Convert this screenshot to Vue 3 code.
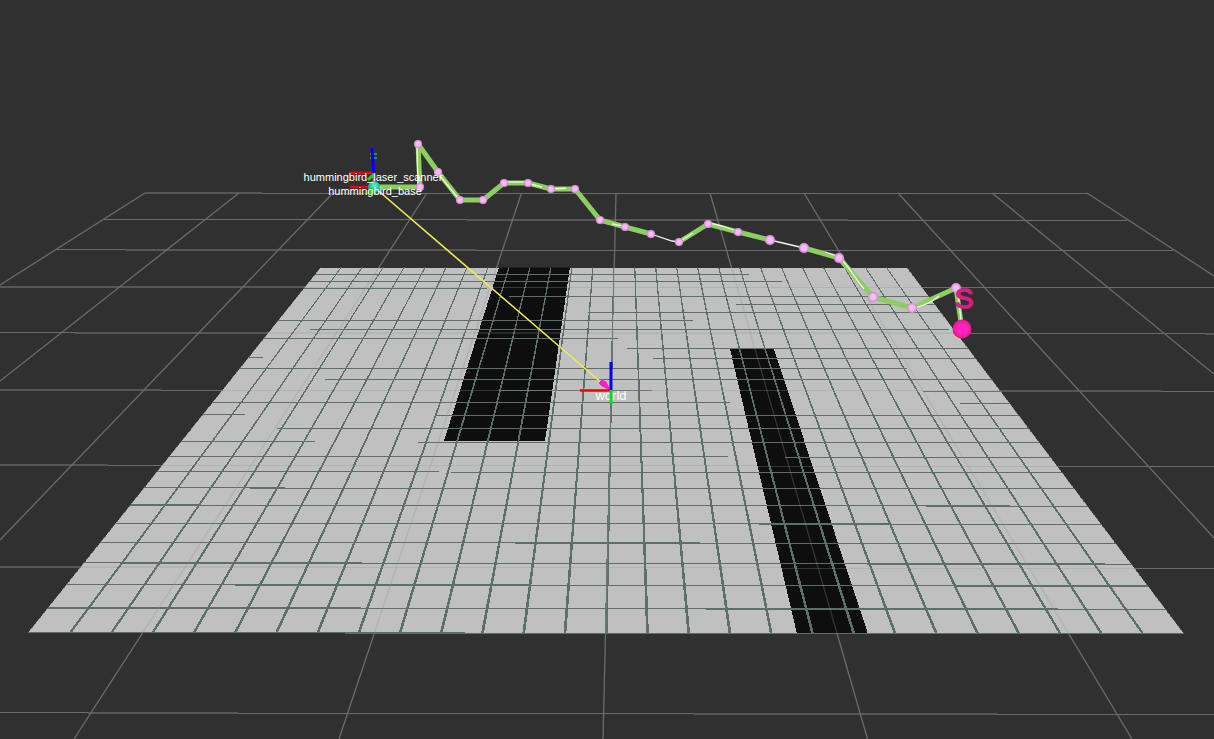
<script setup>
// Camera-projected reference grid
const gridRows = [
  [193, 145, 262, 2], [193.5, 262, 1087, 1], [219.5, 104, 467, 1], [220, 467, 848, 2], [220.5, 848, 1127, 1],
  [249.5, 57, 126, 1], [250, 126, 476, 2], [250.5, 476, 1173, 1],
  [287, 0, 306, 2], [287.5, 306, 1214, 1],
  [332.5, 0, 75, 1], [333, 75, 971, 2], [333.5, 971, 1205, 1], [334, 1205, 1214, 2],
  [390, 0, 161, 2], [390.5, 161, 923, 1], [391, 923, 1161, 2], [391.5, 1161, 1214, 1],
  [465, 0, 108, 2], [465.5, 108, 757, 1], [466.5, 757, 1214, 1],
  [567, 0, 334, 2], [567.5, 334, 780, 1], [568.5, 780, 1214, 1],
  [712.5, 0, 88, 1], [713, 88, 238, 2], [713.5, 238, 694, 1], [714, 694, 997, 2], [714.5, 997, 1214, 1],
]
const gridColumns = [
  [145, 193, 0, 285], [239, 193, 0, 381], [333, 193, 0, 540], [427, 193, 74, 739],
  [521.5, 193, 339, 739], [616, 193, 603, 739], [710, 193, 867.5, 739], [804, 193, 1132, 739],
  [898, 193, 1214, 538], [992, 193, 1214, 374], [1087, 193, 1214, 276],
]

// Occupancy map: 28 x 28 cells seen in perspective
const mapOutline = '320.5,267.5 907,267.5 1184,633.5 28,632.5'
const columns = Array.from({ length: 27 }, (_, i) => {
  const k = i + 1
  const top = 320.5 + 20.95 * k
  const bottom = 28 + 41.3 * k
  return `${top - 0.6},267 ${top + 0.6},267 ${bottom + 1.4},634 ${bottom - 1.4},634`
})
const rows = [
  [274, 0, 749, 1], [281, 0, 782, 1], [288, 0, 487, 1], [296, 509, 1214, 1], [304, 736, 1214, 1],
  [312, 588, 1214, 1], [320, 0, 693, 1], [329, 310, 949, 1], [338, 0, 618, 1], [348, 627, 1214, 1],
  [357, 0, 263, 1], [358, 653, 1214, 1], [368, 0, 907, 1], [379, 325, 1214, 1], [390, 500, 652, 1],
  [391, 923, 1214, 1], [402, 0, 730, 1], [403, 960, 1214, 1], [414, 0, 245, 1], [415, 436, 1214, 1],
  [428, 277, 1214, 1], [441, 0, 315, 1], [442, 418, 1214, 1], [456, 0, 728, 1], [457, 785, 1214, 1],
  [471, 0, 439, 1], [472, 451, 1214, 1], [487, 0, 250, 1], [487, 250, 285, 2], [488, 285, 1214, 1],
  [504, 0, 200, 2], [505, 200, 926, 1], [505, 926, 1010, 2], [506, 1010, 1214, 1],
  [523, 0, 759, 1], [523, 759, 890, 2], [524, 890, 1214, 1],
  [542, 0, 515, 1], [542, 515, 700, 2], [543, 700, 1214, 1],
  [562, 0, 120, 1], [562, 120, 362, 2], [563, 362, 867, 1], [563, 867, 1105, 2], [564, 1105, 1214, 1],
  [584, 0, 235, 1], [584, 235, 530, 2], [585, 530, 955, 1], [585, 955, 1214, 2],
  [607, 0, 361, 2], [608, 361, 706, 1], [608, 706, 1058, 2], [609, 1058, 1214, 1],
]

// Planned trajectory
const nodes = [
  [420, 187, 4], [418, 144, 4], [438, 172, 4], [460, 200, 4], [483, 200, 4], [504, 183, 4], [528, 183, 4],
  [551, 189, 4], [575, 189, 4], [600, 220, 4], [625, 227, 4], [651, 234, 4], [679, 242, 4], [708, 224, 4],
  [738, 232, 4], [770, 240, 5], [804, 248, 5], [839, 258, 5], [873, 297, 5], [912, 308, 5], [956, 288, 5],
]
const segments = [
  '374,187 420,187 418,144 438,172 460,200 483,200 504,183 528,183 551,189 575,189 600,220 625,227 651,234',
  '679,242 708,224 738,232 770,240',
  '804,248 839,258 873,297 912,308 956,288 962,329',
]
const traces = [
  'M418 187L417 147', 'M440 176L458 198', 'M506 182H526', 'M530 184L542 187', 'M553 189L566 188', 'M612 224L623 226',
  'M651 234L672 241L679 242L693 233', 'M710 223L722 226L736 231', 'M770 240L804 248', 'M825 252L837 256',
  'M841 259C850 268 856 280 864 289', 'M914 308Q928 305 939 296', 'M958 293L961 320',
]
</script>

<template>
  <main class="viewport">
    <svg class="scene" viewBox="0 0 1214 739" role="img" aria-label="3D view of map and planned path">
      <defs>
        <clipPath id="map-area"><polygon :points="mapOutline" /></clipPath>
        <radialGradient id="node-fill">
          <stop offset="0.5" stop-color="#ffb8fa" />
          <stop offset="1" stop-color="#c98ac8" />
        </radialGradient>
        <radialGradient id="start-fill">
          <stop offset="0.5" stop-color="#ff24c4" />
          <stop offset="0.75" stop-color="#ff1ca4" />
          <stop offset="1" stop-color="#d81882" />
        </radialGradient>
        <radialGradient id="robot-fill" cx="0.55" cy="0.4">
          <stop offset="0.2" stop-color="#4af0bc" />
          <stop offset="1" stop-color="#2aa880" />
        </radialGradient>
        <g id="grid-lines">
          <line v-for="(l, i) in gridRows" :key="'r' + i" :x1="l[1]" :y1="l[0]" :x2="l[2]" :y2="l[0]" :stroke-width="l[3]" :stroke-opacity="l[3] > 1 ? 0.65 : 1" />
          <line v-for="(l, i) in gridColumns" :key="'c' + i" :x1="l[0]" :y1="l[1]" :x2="l[2]" :y2="l[3]" stroke-width="1.3" />
        </g>
      </defs>

      <use href="#grid-lines" class="grid" />

      <g clip-path="url(#map-area)" shape-rendering="crispEdges">
        <polygon class="free" :points="mapOutline" />
        <polygon class="occupied" points="499,267 570,267 545,441 444,441" />
        <polygon class="occupied" points="730,349 774,349 868,634 797,634" />
        <g class="cells">
          <polygon v-for="(c, i) in columns" :key="i" :points="c" />
          <rect v-for="(r, i) in rows" :key="'h' + i" :x="r[1]" :y="r[0]" :width="r[2] - r[1]" :height="r[3]" />
        </g>
        <path class="border" d="M320.5 267.5L28 632.5M907 267.5L1184 633.5" />
      </g>
      <g clip-path="url(#map-area)"><use href="#grid-lines" class="grid-over" /></g>
      <path class="front-edge" d="M28 632.5H465M345 633.5H1184" />

      <path class="goal-mark" d="M370 154H377M370 158H377" />
      <g class="axes">
        <path class="axis-x" d="M349 173H373M350 187H374" />
        <path class="axis-z" d="M374 176L372 148" />
        <path class="pink" d="M374 174V183" />
      </g>

      <polyline v-for="(s, i) in segments" :key="'s' + i" class="path" :points="s" />
      <path v-for="(t, i) in traces" :key="'t' + i" class="trace" :d="t" />
      <circle v-for="(n, i) in nodes" :key="'n' + i" class="node" :cx="n[0]" :cy="n[1]" :r="n[2]" fill="url(#node-fill)" />
      <circle cx="962" cy="329" r="9.5" fill="url(#start-fill)" />

      <path class="goal-line" d="M374 187L603 384" />
      <polygon class="goal-head" points="599,383 602,380 606,382 610,390 602,386" />
      <circle cx="374" cy="187" r="6" fill="url(#robot-fill)" />
      <path class="axis-y" d="M374 174L368 180M374 188L369 193" />

      <text class="label" x="373" y="181">hummingbird_laser_scanner</text>
      <text class="label" x="375" y="195">hummingbird_base</text>
      <text class="label world" x="611" y="400">world</text>
      <path class="axis-z world-axis" d="M611 362V390" />
      <path class="axis-x" d="M580 390.5H610" />
      <path class="axis-y world-axis" d="M611 390V404" />
      <text class="start" x="964" y="308">S</text>
    </svg>
  </main>
</template>

<style>
body { margin: 0; background: #303030; }
</style>

<style scoped>
.viewport { background: #303030; overflow: hidden; }
.scene { display: block; width: 100%; height: auto; font-family: "Liberation Sans", Arial, sans-serif; }
.grid { stroke: #6b6b6b; }
.grid-over { stroke: rgba(145, 145, 145, 0.3); }
.free { fill: #c0c0c0; }
.occupied { fill: #0e0e0e; }
.cells { fill: #5d6f6b; }
.border { stroke: #5d6f6b; stroke-width: 1; stroke-dasharray: 2 2; fill: none; }
.front-edge { stroke: #5d6f6b; stroke-width: 1; fill: none; }
.path { fill: none; stroke: #8ccf60; stroke-width: 5; stroke-linejoin: round; }
.trace { fill: none; stroke: #eef8e8; stroke-width: 1.3; }
.node { stroke: rgba(201, 138, 200, 0.6); stroke-width: 0.5; }
.goal-line { stroke: #f0ec5a; stroke-width: 1.6; }
.goal-head, .pink { fill: #ff1fc0; stroke: #ff1fc0; stroke-width: 1; }
.axes .pink { stroke-width: 3; }
.axis-x { stroke: #f50000; stroke-width: 2.5; fill: none; }
.axis-y { stroke: #00e01c; stroke-width: 3; fill: none; }
.axis-z { stroke: #0000f5; stroke-width: 3; fill: none; }
.goal-mark { stroke: #2c8f72; stroke-width: 2; fill: none; }
.label { fill: #fff; font-size: 11px; text-anchor: middle; }
.world { font-size: 13px; }
.start { fill: #dc1c88; stroke: #dc1c88; stroke-width: 1.5; font-size: 28px; text-anchor: middle; }
</style>
